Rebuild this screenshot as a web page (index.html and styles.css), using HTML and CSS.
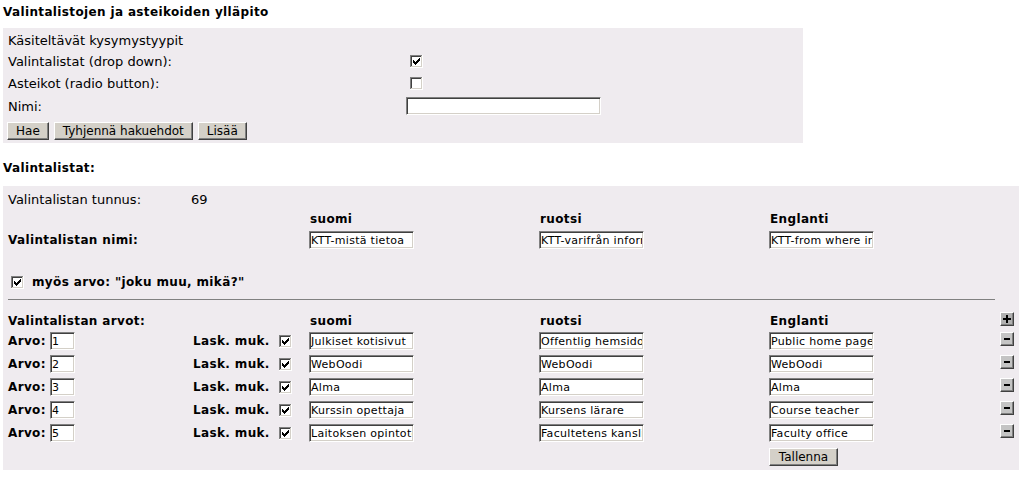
FILE: index.html
```html
<!DOCTYPE html>
<html lang="fi">
<head>
  <meta charset="UTF-8">
  <title>Valintalistojen ja asteikoiden ylläpito</title>
  <link rel="stylesheet" href="styles.css">
</head>
<body>
  <svg class="defs" width="0" height="0">
    <symbol id="cb-frame" viewBox="0 0 13 13">
      <rect x="0" y="0" width="13" height="13" fill="#fff"/>
      <rect x="0" y="0" width="12" height="1" fill="#808080"/>
      <rect x="0" y="0" width="1" height="12" fill="#808080"/>
      <rect x="1" y="1" width="10" height="1" fill="#404040"/>
      <rect x="1" y="1" width="1" height="10" fill="#404040"/>
      <rect x="1" y="11" width="11" height="1" fill="#d4d0c8"/>
      <rect x="11" y="1" width="1" height="11" fill="#d4d0c8"/>
    </symbol>
    <symbol id="cb-on" viewBox="0 0 13 13">
      <use href="#cb-frame"/>
      <rect x="3" y="5" width="1" height="3" fill="#000"/>
      <rect x="4" y="6" width="1" height="3" fill="#000"/>
      <rect x="5" y="7" width="1" height="3" fill="#000"/>
      <rect x="6" y="6" width="1" height="3" fill="#000"/>
      <rect x="7" y="5" width="1" height="3" fill="#000"/>
      <rect x="8" y="4" width="1" height="3" fill="#000"/>
      <rect x="9" y="3" width="1" height="3" fill="#000"/>
    </symbol>
  </svg>

  <h1 class="page-title">Valintalistojen ja asteikoiden ylläpito</h1>

  <div class="search-box">
    <div class="search-row first">Käsiteltävät kysymystyypit</div>
    <div class="search-row">
      <span>Valintalistat (drop down):</span>
      <svg class="cb" width="13" height="13"><use href="#cb-on"/></svg>
    </div>
    <div class="search-row">
      <span>Asteikot (radio button):</span>
      <svg class="cb" width="13" height="13"><use href="#cb-frame"/></svg>
    </div>
    <div class="search-row name">
      <span>Nimi:</span>
      <input type="text" class="text-in name-in">
    </div>
    <div class="btn-row">
      <button type="button" class="btn">Hae</button>
      <button type="button" class="btn">Tyhjennä hakuehdot</button>
      <button type="button" class="btn">Lisää</button>
    </div>
  </div>

  <h2 class="section-title">Valintalistat:</h2>

  <div class="list-box">
    <div class="list-row h20">
      <span>Valintalistan tunnus:</span>
      <span>69</span>
    </div>
    <div class="list-row h20 head">
      <span></span><span></span>
      <b class="lang">suomi</b>
      <b class="lang">ruotsi</b>
      <b class="lang">Englanti</b>
    </div>
    <div class="list-row h22">
      <b>Valintalistan nimi:</b>
      <span></span>
      <input type="text" class="text-in lang-in" value="KTT-mistä tietoa">
      <input type="text" class="text-in lang-in" value="KTT-varifrån information">
      <input type="text" class="text-in lang-in" value="KTT-from where information">
    </div>
    <div class="other-row">
      <svg class="cb" width="13" height="13"><use href="#cb-on"/></svg>
      <b>myös arvo: "joku muu, mikä?"</b>
    </div>
    <hr class="divider">
    <div class="list-row h21 head">
      <b>Valintalistan arvot:</b>
      <span></span>
      <b class="lang">suomi</b>
      <b class="lang">ruotsi</b>
      <b class="lang">Englanti</b>
      <span class="sq-btn plus"></span>
    </div>

    <div class="list-row value">
      <span class="arvo"><b>Arvo:</b><input type="text" class="text-in num-in" value="1"></span>
      <span class="lask"><b>Lask. muk.</b><svg class="cb" width="13" height="13"><use href="#cb-on"/></svg></span>
      <input type="text" class="text-in lang-in" value="Julkiset kotisivut">
      <input type="text" class="text-in lang-in" value="Offentlig hemsidor">
      <input type="text" class="text-in lang-in" value="Public home page">
      <span class="sq-btn minus"></span>
    </div>
    <div class="list-row value">
      <span class="arvo"><b>Arvo:</b><input type="text" class="text-in num-in" value="2"></span>
      <span class="lask"><b>Lask. muk.</b><svg class="cb" width="13" height="13"><use href="#cb-on"/></svg></span>
      <input type="text" class="text-in lang-in" value="WebOodi">
      <input type="text" class="text-in lang-in" value="WebOodi">
      <input type="text" class="text-in lang-in" value="WebOodi">
      <span class="sq-btn minus"></span>
    </div>
    <div class="list-row value">
      <span class="arvo"><b>Arvo:</b><input type="text" class="text-in num-in" value="3"></span>
      <span class="lask"><b>Lask. muk.</b><svg class="cb" width="13" height="13"><use href="#cb-on"/></svg></span>
      <input type="text" class="text-in lang-in" value="Alma">
      <input type="text" class="text-in lang-in" value="Alma">
      <input type="text" class="text-in lang-in" value="Alma">
      <span class="sq-btn minus"></span>
    </div>
    <div class="list-row value">
      <span class="arvo"><b>Arvo:</b><input type="text" class="text-in num-in" value="4"></span>
      <span class="lask"><b>Lask. muk.</b><svg class="cb" width="13" height="13"><use href="#cb-on"/></svg></span>
      <input type="text" class="text-in lang-in" value="Kurssin opettaja">
      <input type="text" class="text-in lang-in" value="Kursens lärare">
      <input type="text" class="text-in lang-in" value="Course teacher">
      <span class="sq-btn minus"></span>
    </div>
    <div class="list-row value">
      <span class="arvo"><b>Arvo:</b><input type="text" class="text-in num-in" value="5"></span>
      <span class="lask"><b>Lask. muk.</b><svg class="cb" width="13" height="13"><use href="#cb-on"/></svg></span>
      <input type="text" class="text-in lang-in" value="Laitoksen opintotoimisto">
      <input type="text" class="text-in lang-in" value="Facultetens kansli">
      <input type="text" class="text-in lang-in" value="Faculty office">
      <span class="sq-btn minus"></span>
    </div>

    <div class="list-row save">
      <span></span><span></span><span></span><span></span>
      <button type="button" class="btn">Tallenna</button>
    </div>
  </div>
</body>
</html>
```

FILE: styles.css
```css
body {
  margin: 0;
  padding: 0 3px;
  font-family: "DejaVu Sans", Verdana, sans-serif;
  font-size: 13px;
  color: #000;
  background: #fff;
}
b,
.page-title,
.section-title {
  font-size: 12px;
  font-weight: bold;
  letter-spacing: 0.36px;
}
.defs {
  display: block;
  width: 0;
  height: 0;
  overflow: hidden;
}
.page-title {
  margin: 0 0 8px;
  padding-top: 4px;
  line-height: 16px;
}
.section-title {
  margin: 17px 0 10px;
  line-height: 16px;
}

/* hakulaatikko */
.search-box {
  box-sizing: border-box;
  width: 800px;
  height: 115px;
  padding: 2px 0 0 5px;
  background: #efebef;
}
.search-row {
  display: grid;
  grid-template-columns: 398px auto;
  align-items: center;
  height: 22px;
}
.search-row.first { height: 20px; }
.search-row.name { height: 24px; }
.cb {
  display: block;
}
.search-row .cb { margin-left: 4px; }
.btn-row {
  display: flex;
  gap: 5px;
  margin: 4px 0 0 -1px;
}

/* lomakekentat */
.text-in {
  box-sizing: border-box;
  height: 18px;
  margin: 0;
  padding: 0 1px;
  border: 1px solid;
  border-color: #808080 #fff #fff #808080;
  box-shadow: inset 1px 1px #404040, inset -1px -1px #d4d0c8;
  background: #fff;
  color: #000;
  font-family: "DejaVu Sans", Verdana, sans-serif;
  font-size: 11px;
  letter-spacing: 0.3px;
  outline: none;
}
.name-in { width: 195px; }
.lang-in { width: 105px; }
.num-in { width: 25px; }
.btn {
  box-sizing: border-box;
  height: 18px;
  padding: 0 8px 1px;
  border: 1px solid;
  border-color: #fff #404040 #404040 #fff;
  box-shadow: inset -1px -1px #808080;
  background: #d4d0c8;
  color: #000;
  font-family: "DejaVu Sans", Verdana, sans-serif;
  font-size: 12px;
}

/* valintalistat */
.list-box {
  box-sizing: border-box;
  width: 1016px;
  height: 284px;
  padding: 3px 0 0 5px;
  background: #efebef;
}
.list-row {
  display: grid;
  grid-template-columns: 183px 118px 230px 230px 231px 19px;
  align-items: center;
}
.h20 { height: 20px; }
.h21 { height: 21px; }
.h22 { height: 22px; }
.lang { padding-left: 1px; }
.other-row {
  display: flex;
  align-items: center;
  height: 24px;
  margin-top: 19px;
}
.other-row .cb { margin: 0 8px 0 3px; }
.divider {
  margin: 5px 24px 10px 0;
  height: 0;
  border: 0;
  border-top: 1px solid #808080;
}
.list-row.value {
  height: 23px;
  align-items: start;
}
.list-row.value > * { margin-top: 1px; }
.arvo {
  display: flex;
  align-items: center;
}
.arvo b {
  flex: none;
  width: 42px;
}
.lask {
  display: flex;
  align-items: center;
  gap: 9px;
  padding: 3px 0 0 2px;
}
.list-row.value .lask { margin-top: 0; }
.list-row.save > .btn {
  width: 69px;
  margin-top: 1px;
  justify-self: start;
}
.list-row.save { height: 21px; }

.sq-btn {
  position: relative;
  box-sizing: border-box;
  width: 14px;
  height: 14px;
  border: 1px solid;
  border-color: #fff #404040 #404040 #fff;
  box-shadow: inset -1px -1px #808080;
  background: #c4c4c4;
  align-self: start;
}
.plus {
  margin-top: 2px;
  background: #b0b0b0;
}
.plus::before,
.plus::after,
.minus::before {
  content: "";
  position: absolute;
  background: #000;
}
.plus::before { left: 2px; top: 5px; width: 8px; height: 2px; }
.plus::after { left: 5px; top: 2px; width: 2px; height: 8px; }
.minus::before { left: 3px; top: 5px; width: 6px; height: 2px; }
```
